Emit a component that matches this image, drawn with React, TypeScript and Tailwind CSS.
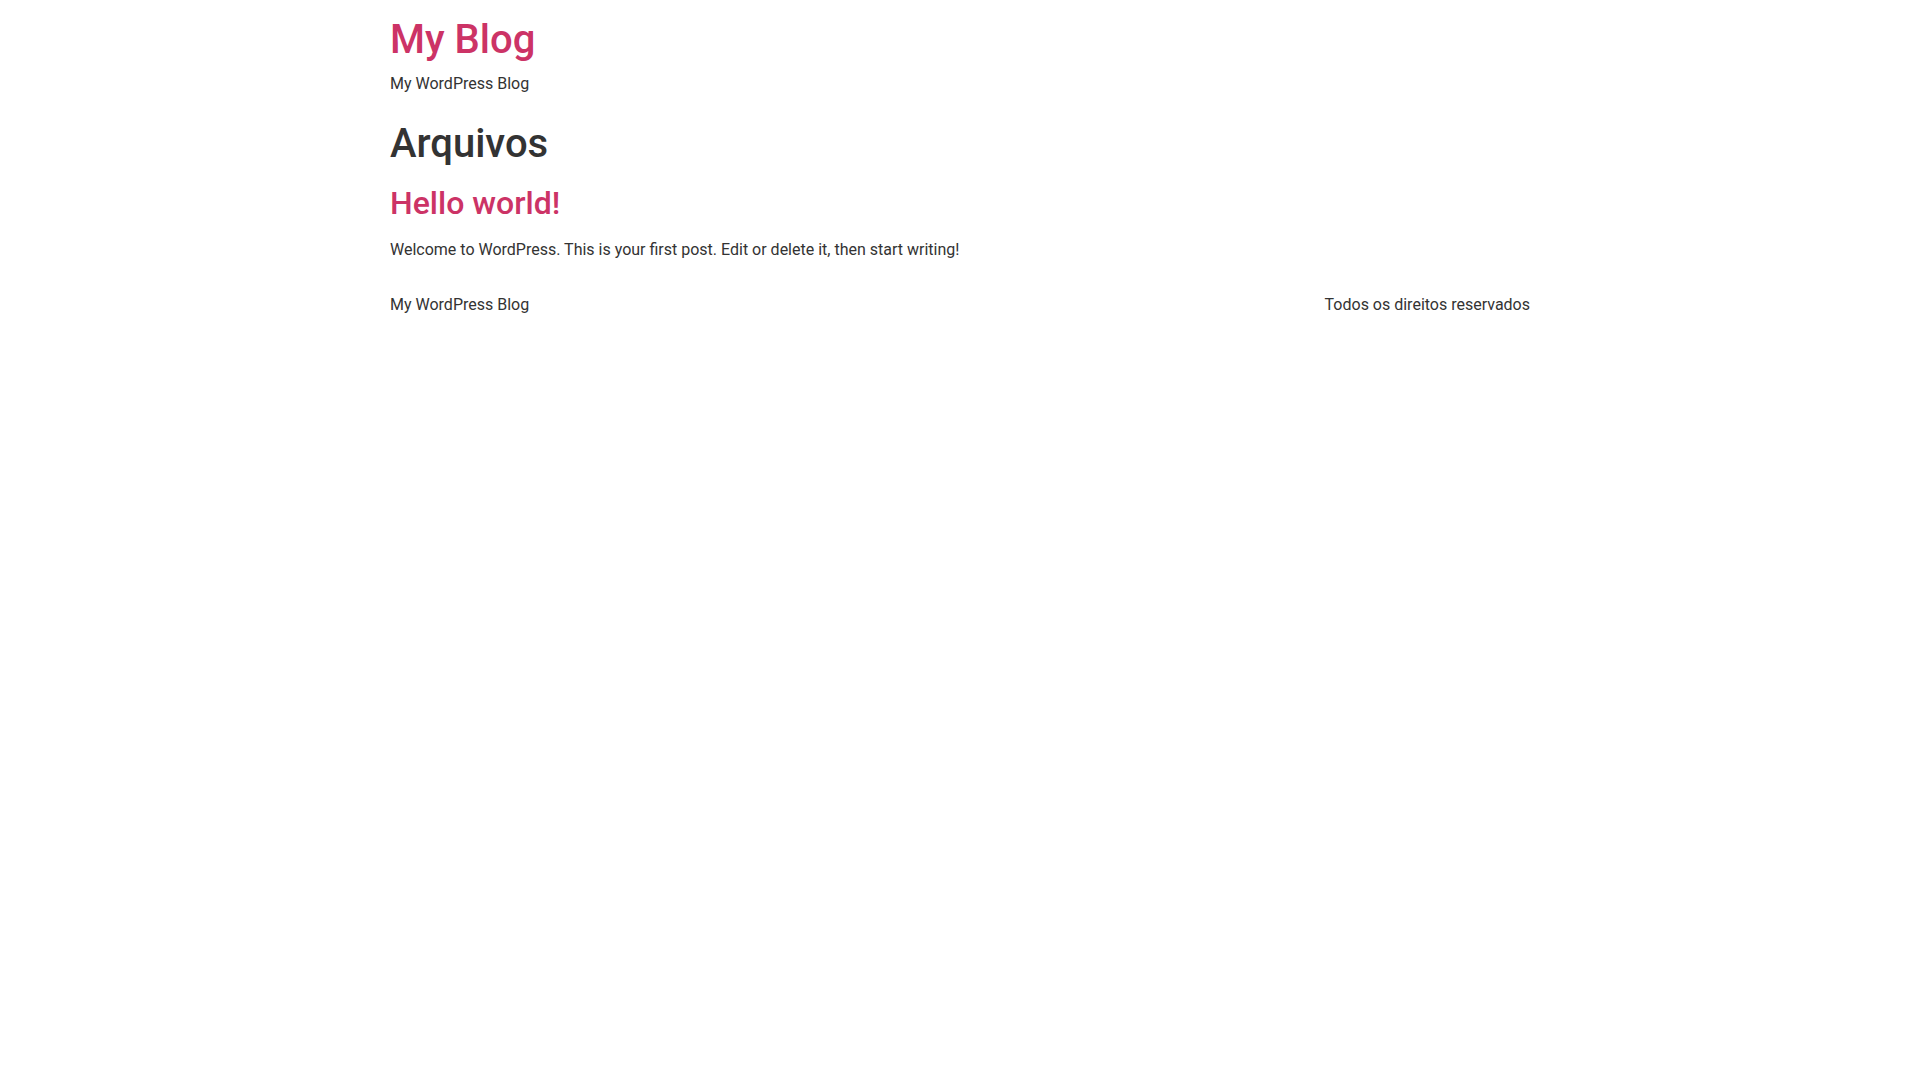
export default function App() {
  return (
    <div className="min-h-screen bg-white text-[#333333] font-['Roboto',sans-serif] text-base leading-6">
      <header className="mx-auto w-[1140px] pt-4">
        <h1 className="text-[40px] leading-[48px] font-medium">
          <a href="#" className="text-[#cc3366]">
            My Blog
          </a>
        </h1>
        <p className="mt-2">My WordPress Blog</p>
      </header>

      <main className="mx-auto w-[1140px] mt-6">
        <h1 className="text-[40px] leading-[48px] font-medium">Arquivos</h1>
        <article className="mt-4">
          <h2 className="text-[32px] leading-[38px] font-medium">
            <a href="#" className="text-[#cc3366]">
              Hello world!
            </a>
          </h2>
          <p className="mt-4">
            Welcome to WordPress. This is your first post. Edit or delete it,
            then start writing!
          </p>
        </article>
      </main>

      <footer className="mx-auto w-[1140px] mt-[31px] flex justify-between">
        <p>My WordPress Blog</p>
        <p>Todos os direitos reservados</p>
      </footer>
    </div>
  );
}
